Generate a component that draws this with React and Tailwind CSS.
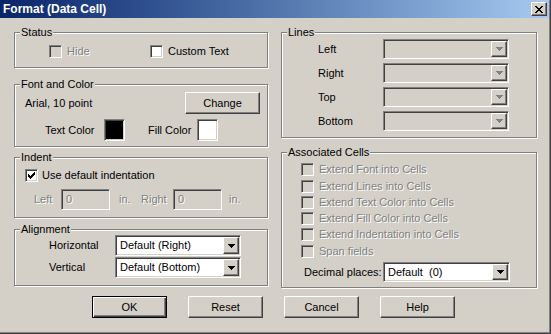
import React from 'react';

const raised =
  'border border-t-white border-l-white border-r-[#404040] border-b-[#404040] shadow-[inset_-1px_-1px_0_#808080]';
const sunken =
  'border border-t-[#808080] border-l-[#808080] border-r-white border-b-white shadow-[inset_1px_1px_0_#404040,inset_-1px_-1px_0_#d4d0c8]';
const dim = 'text-[#808080] [text-shadow:1px_1px_0_#fff]';

function Arrow({ disabled }) {
  return (
    <svg width="7" height="4" viewBox="0 0 7 4" shapeRendering="crispEdges">
      <path d="M0 0h7v1h-7z M1 1h5v1h-5z M2 2h3v1h-3z M3 3h1v1h-1z" fill={disabled ? '#808080' : '#000'} />
    </svg>
  );
}

function Check() {
  return (
    <svg width="7" height="7" viewBox="0 0 7 7" shapeRendering="crispEdges">
      <path
        d="M0 2h1v3h-1z M1 3h1v3h-1z M2 4h1v3h-1z M3 3h1v3h-1z M4 2h1v3h-1z M5 1h1v3h-1z M6 0h1v3h-1z"
        fill="#000"
      />
    </svg>
  );
}

function Checkbox({ checked, disabled }) {
  return (
    <span
      className={`flex h-[13px] w-[13px] shrink-0 items-center justify-center ${sunken} ${
        disabled ? 'bg-[#d4d0c8]' : 'bg-white'
      }`}
    >
      {checked && <Check />}
    </span>
  );
}

function Select({ value, disabled, className }) {
  return (
    <div className={`flex items-center p-[1px] ${sunken} ${disabled ? 'bg-[#d4d0c8]' : 'bg-white'} ${className}`}>
      <span className="flex-1 whitespace-pre pl-[3px]">{value}</span>
      <span className={`flex h-full w-[16px] items-center justify-center bg-[#d4d0c8] ${raised}`}>
        <Arrow disabled={disabled} />
      </span>
    </div>
  );
}

function Button({ children, primary }) {
  return (
    <div
      className={`flex h-[22px] w-[75px] items-center justify-center bg-[#d4d0c8] ${
        primary
          ? 'border border-black shadow-[inset_1px_1px_0_#fff,inset_-1px_-1px_0_#404040,inset_-2px_-2px_0_#808080]'
          : raised
      }`}
    >
      {children}
    </div>
  );
}

function Group({ title, className, children }) {
  return (
    <div className={`relative border border-[#808080] shadow-[inset_1px_1px_0_#fff,1px_1px_0_#fff] ${className}`}>
      <span className="absolute -top-[7px] left-[5px] bg-[#d4d0c8] px-[1px] leading-[13px]">{title}</span>
      {children}
    </div>
  );
}

export default function App() {
  return (
    <div className="h-[334px] w-[551px] overflow-hidden border-r border-b border-[#404040] bg-[#d4d0c8] pr-[1px] font-['Liberation_Sans',Arial,sans-serif] text-[11px] leading-[13px] text-black shadow-[inset_-1px_-1px_0_#808080]">
      <div className="flex h-[18px] items-center justify-between bg-linear-to-r from-[#0a246a] to-[#a6caf0]">
        <span className="pl-[3px] text-[12px] font-bold text-white">Format (Data Cell)</span>
        <span className={`mr-[2px] flex h-[14px] w-[16px] items-center justify-center bg-[#d4d0c8] ${raised}`}>
          <svg width="8" height="7" viewBox="0 0 8 7" shapeRendering="crispEdges">
            <path
              d="M0 0h2v1h-2z M6 0h2v1h-2z M1 1h2v1h-2z M5 1h2v1h-2z M2 2h4v1h-4z M3 3h2v1h-2z M2 4h4v1h-4z M1 5h2v1h-2z M5 5h2v1h-2z M0 6h2v1h-2z M6 6h2v1h-2z"
              fill="#000"
            />
          </svg>
        </span>
      </div>

      <div className="flex gap-[13px] pl-[14px] pt-[14px]">
        {/* left column */}
        <div className="flex w-[254px] flex-col">
          <Group title="Status" className="h-[36px]">
            <div className="flex items-center pl-[34px] pt-[12px]">
              <div className="flex w-[101px] items-center">
                <Checkbox disabled />
                <span className={`ml-[5px] ${dim}`}>Hide</span>
              </div>
              <Checkbox />
              <span className="ml-[5px]">Custom Text</span>
            </div>
          </Group>

          <Group title="Font and Color" className="mt-[16px] h-[63px]">
            <div className="mt-[7px] flex h-[22px] items-center justify-between pl-[10px] pr-[7px]">
              <span>Arial, 10 point</span>
              <Button>Change</Button>
            </div>
            <div className="mt-[5px] flex h-[22px] items-center pl-[30px]">
              <span className="w-[59px]">Text Color</span>
              <span className={`h-[22px] w-[21px] bg-black ${sunken}`} />
              <span className="ml-[23px] w-[49px]">Fill Color</span>
              <span className={`h-[22px] w-[21px] bg-white ${sunken}`} />
            </div>
          </Group>

          <Group title="Indent" className="mt-[10px] h-[61px]">
            <div className="flex items-center pl-[10px] pt-[11px]">
              <Checkbox checked />
              <span className="ml-[4px]">Use default indentation</span>
            </div>
            <div className="mt-[7px] flex items-center pl-[19px]">
              <span className={`w-[27px] ${dim}`}>Left</span>
              <span className={`flex h-[21px] w-[49px] items-center pl-[4px] ${sunken} ${dim}`}>0</span>
              <span className={`ml-[9px] w-[22px] ${dim}`}>in.</span>
              <span className={`w-[32px] ${dim}`}>Right</span>
              <span className={`flex h-[21px] w-[49px] items-center pl-[4px] ${sunken} ${dim}`}>0</span>
              <span className={`ml-[7px] ${dim}`}>in.</span>
            </div>
          </Group>

          <Group title="Alignment" className="mt-[11px] h-[57px]">
            <div className="flex flex-col gap-[1px] pl-[34px] pt-[5px]">
              <div className="flex items-center">
                <span className="w-[66px]">Horizontal</span>
                <Select value="Default (Right)" className="h-[21px] w-[126px]" />
              </div>
              <div className="flex items-center">
                <span className="w-[66px]">Vertical</span>
                <Select value="Default (Bottom)" className="h-[21px] w-[126px]" />
              </div>
            </div>
          </Group>
        </div>

        {/* right column */}
        <div className="flex w-[256px] flex-col">
          <Group title="Lines" className="h-[106px]">
            <div className="flex flex-col gap-[4px] pl-[36px] pt-[6px]">
              {['Left', 'Right', 'Top', 'Bottom'].map((l) => (
                <div key={l} className="flex items-center">
                  <span className="w-[65px]">{l}</span>
                  <Select value="" disabled className="h-[20px] w-[126px]" />
                </div>
              ))}
            </div>
          </Group>

          <Group title="Associated Cells" className="mt-[14px] h-[136px]">
            <div className="flex flex-col pl-[19px] pt-[8px]">
              <div className="flex h-[16px] items-center">
                <Checkbox disabled />
                <span className={`ml-[5px] ${dim}`}>Extend Font into Cells</span>
              </div>
              <div className="mt-[1px] flex h-[16px] items-center">
                <Checkbox disabled />
                <span className={`ml-[5px] ${dim}`}>Extend Lines into Cells</span>
              </div>
              <div className="flex h-[16px] items-center">
                <Checkbox disabled />
                <span className={`ml-[5px] ${dim}`}>Extend Text Color into Cells</span>
              </div>
              <div className="flex h-[16px] items-center">
                <Checkbox disabled />
                <span className={`ml-[5px] ${dim}`}>Extend Fill Color into Cells</span>
              </div>
              <div className="flex h-[16px] items-center">
                <Checkbox disabled />
                <span className={`ml-[5px] ${dim}`}>Extend Indentation into Cells</span>
              </div>
              <div className="mt-[1px] flex h-[16px] items-center">
                <Checkbox disabled />
                <span className={`ml-[5px] ${dim}`}>Span fields</span>
              </div>
              <div className="ml-[3px] mt-[3px] flex items-center">
                <span className="w-[79px]">Decimal places:</span>
                <Select value="Default  (0)" className="h-[20px] w-[127px]" />
              </div>
            </div>
          </Group>
        </div>
      </div>

      <div className="mt-[8px] flex gap-[21px] pl-[92px]">
        <Button primary>OK</Button>
        <Button>Reset</Button>
        <Button>Cancel</Button>
        <Button>Help</Button>
      </div>
    </div>
  );
}
